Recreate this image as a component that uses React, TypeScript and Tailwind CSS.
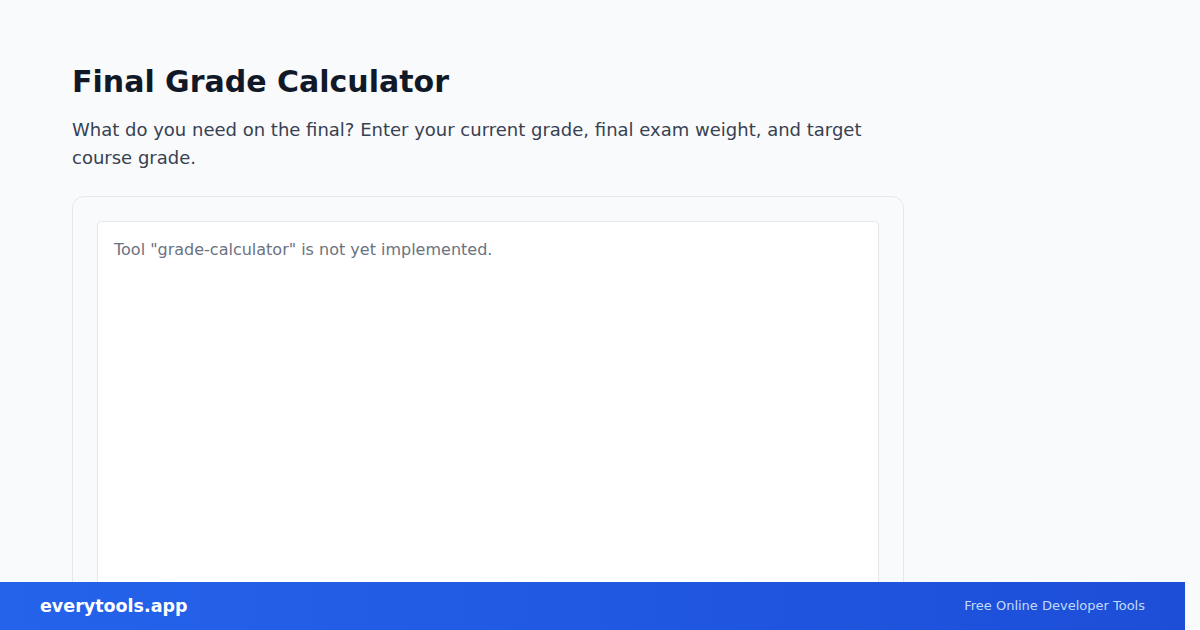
export default function App() {
  return (
    <div
      className="relative min-h-[630px] h-[630px] overflow-hidden bg-[#f9fafb]"
      style={{ fontFamily: '"DejaVu Sans", "Noto Sans", sans-serif' }}
    >
      <main className="px-[72px] pt-16">
        <div className="w-[832px]">
          <h1 className="text-[30px] leading-9 font-bold text-[#111827]">Final Grade Calculator</h1>
          <p className="mt-4 text-lg leading-7 text-[#374151]">
            What do you need on the final? Enter your current grade, final exam weight, and target course grade.
          </p>
          <section className="mt-6 rounded-xl border border-[#e5e7eb] bg-[#f9fafb] p-6">
            <div className="min-h-[420px] rounded border border-[#e5e7eb] bg-white p-4">
              <p className="text-base leading-6 text-[#6b7280]">
                Tool "grade-calculator" is not yet implemented.
              </p>
            </div>
          </section>
        </div>
      </main>
      <footer className="absolute bottom-0 left-0 flex h-12 w-[1185px] items-center justify-between bg-gradient-to-r from-[#2563eb] to-[#1d4ed8] px-10">
        <span className="text-[17.5px] font-bold text-white">everytools.app</span>
        <span className="text-[13px] text-[#dbeafe]/90">Free Online Developer Tools</span>
      </footer>
    </div>
  );
}
